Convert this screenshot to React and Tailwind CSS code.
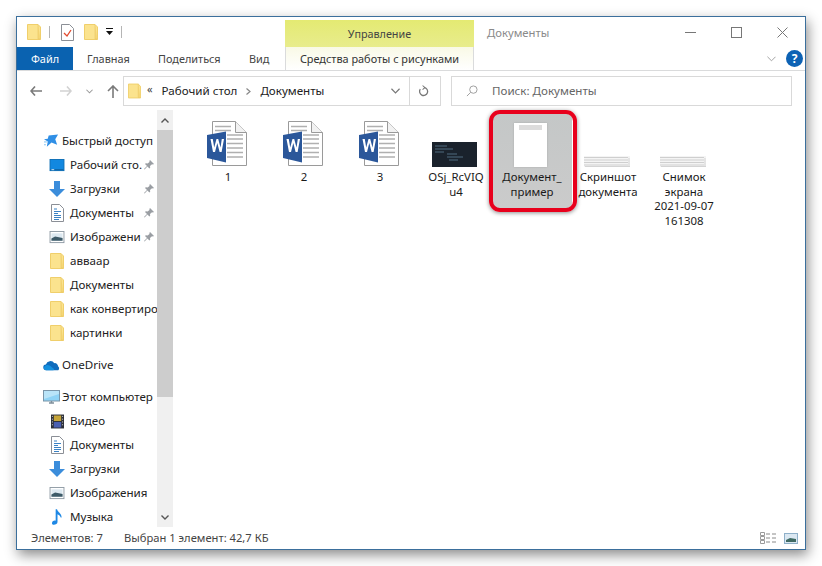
const Folder = ({ className = "w-[14px] h-[16px]" }) => (
  <svg viewBox="0 0 14 16" className={className}>
    <path d="M.5.5h10.5l2.500 2.500v12.500H.5z" fill="#fbe38e" stroke="#f0cf6b" />
    <path d="M11 .5v14.500h2.500" fill="#f6d776" stroke="#eac765" strokeWidth=".6" />
  </svg>
);
const DocIcon = () => (
  <svg viewBox="0 0 13 18" className="w-[13px] h-[18px]">
    <path d="M.5.5h8l4 4v13H.5z" fill="#fff" stroke="#8b8f96" />
    <path d="M3 5h3M3 7.500h7M3 9.500h4M3 11.500h7M3 13.500h7M3 15.500h5" stroke="#3b82c4" strokeWidth="1" />
  </svg>
);
const Pin = () => (
  <svg viewBox="0 0 10 10" className="w-[10px] h-[10px]">
    <path d="M6 0l4 4-1 .6-1-.4L6 6l.2 1.800L5.400 8.500 3.400 6.500.6 9.500 0 9l3-2.900-2-2 .8-.8L3.600 3.600 5.500 2 5.400 1z" fill="#9a9ea3" />
  </svg>
);
const Star = () => (
  <svg viewBox="0 0 16 14" className="w-[15px] h-[14px]">
    <path d="M5 1l10-1-3 5 2 6-6-2.500L3 13l1-5.500L0 5l4-.5z" fill="#2f8fe6" />
    <path d="M0 8h3M0 11h2" stroke="#7cc0f2" strokeWidth="1" />
  </svg>
);
const Desktop = () => (
  <svg viewBox="0 0 16 14" className="w-[16px] h-[13px]">
    <rect x=".5" y=".5" width="15" height="12" fill="#1288e0" stroke="#0b6db5" />
    <path d="M1 11.500h14" stroke="#0c5f9e" strokeWidth="1" />
    <path d="M2 11.500h3" stroke="#ddeefa" strokeWidth="1" />
  </svg>
);
const Download = () => (
  <svg viewBox="0 0 16 16" className="w-[16px] h-[16px]">
    <path d="M5 0h6v8h5l-8 8-8-8h5z" fill="#3b8ddb" />
  </svg>
);
const Pictures = () => (
  <svg viewBox="0 0 16 14" className="w-[16px] h-[13px]">
    <rect x=".5" y=".5" width="15" height="12" fill="#fff" stroke="#8d99a3" />
    <rect x="2" y="2.500" width="12" height="8" fill="#dce8f0" />
    <path d="M2 8l4-2 8 1.500v3H2z" fill="#3d5a68" />
  </svg>
);
const Cloud = () => (
  <svg viewBox="0 0 18 11" className="w-[17px] h-[11px]">
    <path d="M3.500 10.500a3 3 0 01-.4-6A5 5 0 0112 3a3.500 3.500 0 014 3.500c1.500.5 1.500 4-.5 4z" fill="#0f6cbd" />
    <path d="M3.500 10.500c-3 0-3.500-4-.5-5 2-1 4 0 6 1.500l3 2.500-1 1z" fill="#1490df" />
  </svg>
);
const Computer = () => (
  <svg viewBox="0 0 17 15" className="w-[17px] h-[15px]">
    <rect x=".5" y=".5" width="16" height="10.500" fill="#8fd3f5" stroke="#7a95a8" />
    <path d="M1 1h15v3L1 9z" fill="#b9e4f8" />
    <path d="M6 13h5M8.500 11v2" stroke="#7f8f9b" strokeWidth="1.500" />
  </svg>
);
const Film = () => (
  <svg viewBox="0 0 14 15" className="w-[13px] h-[15px]">
    <rect width="14" height="15" fill="#2d2f38" />
    <rect x="3" y="1" width="8" height="6" fill="#c7a63a" />
    <rect x="3" y="8" width="8" height="6" fill="#4a5fb0" />
    <path d="M1 2h1M1 5h1M1 8h1M1 11h1M12 2h1M12 5h1M12 8h1M12 11h1" stroke="#e6e6e6" strokeWidth="1" />
  </svg>
);
const Music = () => (
  <svg viewBox="0 0 12 17" className="w-[11px] h-[16px]">
    <path d="M4 0h1.500c.5 3 5 4.500 5 9h-1C9 7 7 6 6 5.500V14c0 2-2 3-4 3-1.500 0-2-1-2-1.500C0 13 2 12 4 12.500z" fill="#1e88e5" />
  </svg>
);
const Word = () => (
  <svg viewBox="0 0 40 46" className="w-[40px] h-[46px] mr-[3px]">
    <path d="M5.500.5h23l11 11v33h-34z" fill="#fff" stroke="#9a9a9a" />
    <path d="M28.500.5v11h11" fill="#f2f2f2" stroke="#9a9a9a" />
    <path d="M8 5.500h16M8 9.500h16M20 14h16M20 18h16M20 22.500h16M20 27h16M20 31.500h16M20 36h16" stroke="#b0b0b0" strokeWidth="1.600" />
    <path d="M0 14l19-3.500v31L0 37z" fill="#2b579a" />
    <path d="M3.500 18l2.500 13h2l2.300-9 2.300 9h2L17 18h-2.200l-1.300 8.500L11.200 18H9.500l-2.300 8.500L5.800 18z" fill="#fff" />
  </svg>
);
const Row = ({ icon, text, pin, top }) => (
  <div className={`flex items-center h-[24px] whitespace-nowrap relative ${top ? "pl-[24px]" : "pl-[32px]"}`}>
    <span className={`flex items-center justify-center shrink-0 ${top ? "w-[20px] mr-[1px]" : "w-[16px] mr-[5px]"}`}>{icon}</span>
    <span>{text}</span>
    {pin && (
      <span className="absolute left-[126px] top-[7px] bg-white pl-[1px]">
        <Pin />
      </span>
    )}
  </div>
);
const FileItem = ({ icon, lines, selected }) => (
  <div className="w-[76px] shrink-0 flex flex-col items-center relative">
    {selected && (
      <>
        <div className="absolute left-[-1px] top-[-4px] w-[79px] h-[94px] bg-gradient-to-b from-[#c4c7c7] to-[#cbcbcb]" />
        <div className="absolute left-[-5px] top-[-8px] w-[88px] h-[102px] rounded-[11px] border-[4px] border-[#e8001c] shadow-[0_1px_4px_rgba(0,0,0,0.45)]" />
      </>
    )}
    <div className="h-[49px] flex items-end justify-center relative">{icon}</div>
    <div className="mt-[3px] text-center leading-[14.700px] text-[11.400px] text-[#1a1a1a] relative">
      {lines.map((l) => (
        <div key={l} className="whitespace-nowrap">{l}</div>
      ))}
    </div>
  </div>
);
const Shot = () => (
  <svg viewBox="0 0 46 11" className="w-[46px] h-[11px] mr-[2px]">
    <rect width="46" height="11" fill="#f4f4f4" />
    <path d="M0 1.500h44M0 4h44M0 6.500h44M0 9h44" stroke="#cfcfcf" strokeWidth="1.200" />
    <path d="M45 2v9M1 10.500h45" stroke="#d4d4d4" strokeWidth="1" />
  </svg>
);

export default function App() {
  return (
    <div className="w-[822px] h-[566px] bg-white pt-[16px] pl-[16px] overflow-hidden text-[11.600px] text-[#222]" style={{ fontFamily: '"Noto Sans", sans-serif' }}>
      <div className="w-[790px] h-[534px] bg-white border border-[#3b6f9c] flex flex-col shadow-[2px_5px_12px_rgba(0,0,0,0.45)]">
        {/* title row */}
        <div className="h-[30px] flex relative shrink-0">
          <div className="flex items-center pl-[10px] w-[268px]">
            <Folder />
            <div className="w-px h-[12px] bg-[#b5b5b5] ml-[8px]" />
            <span className="ml-[11px]">
              <svg viewBox="0 0 13 17" className="w-[13px] h-[17px]">
                <path d="M.5.5h8l4 4v12H.5z" fill="#fff" stroke="#8b8f96" />
                <path d="M3 9l3 3 4-6" fill="none" stroke="#e2492e" strokeWidth="1.300" />
              </svg>
            </span>
            <span className="ml-[10px]"><Folder /></span>
            <svg viewBox="0 0 7 8" className="w-[7px] h-[8px] ml-[8px]">
              <path d="M0 0h7v1H0zM0 3h7L3.500 7z" fill="#111" />
            </svg>
            <div className="w-px h-[12px] bg-[#b5b5b5] ml-[8px]" />
          </div>
          <div className="w-[189px] mt-[3px] bg-gradient-to-b from-[#e4ea72] to-[#e8ec8c] flex items-center justify-center text-[#444] text-[10.800px] pt-[1px]">Управление</div>
          <div className="ml-[13px] flex items-center text-[#8a8a8a] text-[11.300px] pt-[2px]">Документы</div>
          <div className="ml-auto flex items-center text-[#666] pr-[17px] gap-[35px]">
            <svg viewBox="0 0 11 11" className="w-[11px] h-[11px]"><path d="M0 5.500h11" stroke="#777" /></svg>
            <svg viewBox="0 0 11 11" className="w-[11px] h-[11px]"><rect x=".5" y=".5" width="10" height="10" fill="none" stroke="#777" /></svg>
            <svg viewBox="0 0 11 11" className="w-[11px] h-[11px]"><path d="M.5.500l10 10M10.500.500l-10 10" stroke="#777" /></svg>
          </div>
        </div>
        {/* tabs */}
        <div className="h-[24px] flex items-stretch border-b border-[#dadbdc] shrink-0 relative text-[10.900px]">
          <div className="w-[56px] bg-[#0a62b0] text-white flex items-center justify-center pt-[1px]">Файл</div>
          <div className="w-[85px] pl-[14px] flex items-center text-[#444] pt-[1px]">Главная</div>
          <div className="w-[91px] flex items-center text-[#444] pt-[1px]">Поделиться</div>
          <div className="w-[36px] flex items-center text-[#444] pt-[1px]">Вид</div>
          <div className="w-[189px] border-x border-[#dadbdc] bg-gradient-to-b from-[#f9f9e6] to-white flex items-center justify-center text-[#333] whitespace-nowrap mb-[-1px] h-[23px] pt-[1px]">Средства работы с рисунками</div>
          <div className="ml-auto flex items-center pr-[2px]">
            <svg viewBox="0 0 10 6" className="w-[9px] h-[6px] mr-[10px]"><path d="M.5.500L5 5 9.500.500" fill="none" stroke="#999" /></svg>
            <div className="w-[17px] h-[17px] rounded-full bg-[#0d62b4] text-white flex items-center justify-center font-bold text-[12px]">?</div>
          </div>
        </div>
        {/* address row */}
        <div className="h-[39px] flex items-start shrink-0 pt-[5px] text-[#333]">
          <div className="w-[106px] h-[30px] flex items-center shrink-0 pl-[13px]">
            <svg viewBox="0 0 12 10" className="w-[12px] h-[10px]"><path d="M5 .5L1 5l4 4.500M1 5h11" fill="none" stroke="#7a7a7a" strokeWidth="1.600" /></svg>
            <svg viewBox="0 0 12 10" className="w-[12px] h-[10px] ml-[18px]"><path d="M7 .5L11 5 7 9.500M11 5H0" fill="none" stroke="#d2d2d2" strokeWidth="1.600" /></svg>
            <svg viewBox="0 0 8 5" className="w-[7px] h-[5px] ml-[14px]"><path d="M.5.500L4 4 7.500.500" fill="none" stroke="#999" strokeWidth="1.200" /></svg>
            <svg viewBox="0 0 12 13" className="w-[12px] h-[13px] ml-[14px]"><path d="M1 6l5-5 5 5M6 1v12" fill="none" stroke="#7a7a7a" strokeWidth="1.600" /></svg>
          </div>
          <div className="w-[318px] h-[30px] border border-[#d9d9d9] flex items-center shrink-0">
            <span className="ml-[4px]"><Folder className="w-[13px] h-[16px]" /></span>
            <span className="ml-[6px] mt-[-5px] text-[#444] text-[11px] leading-none">«</span>
            <span className="ml-[9px] text-[#222]">Рабочий стол</span>
            <svg viewBox="0 0 5 7" className="w-[5px] h-[7px] ml-[9px]"><path d="M.5.500L4 3.500.5 6.500" fill="none" stroke="#888" strokeWidth="1.200" /></svg>
            <span className="ml-[9px] text-[#222]">Документы</span>
            <svg viewBox="0 0 10 6" className="w-[9px] h-[6px] ml-auto mr-[9px]"><path d="M.5.500L5 5 9.500.500" fill="none" stroke="#777" strokeWidth="1.300" /></svg>
            <div className="w-[31px] h-full border-l border-[#d9d9d9] flex items-center justify-center pr-[3px]">
              <svg viewBox="0 0 12 12" className="w-[11px] h-[12px]"><path d="M7 2.200A4.400 4.400 0 112.500 4" fill="none" stroke="#777" strokeWidth="1.400" /><path d="M5 0l2.500 2.300L5 4.600" fill="none" stroke="#777" strokeWidth="1.100" /></svg>
            </div>
          </div>
          <div className="w-[341px] h-[30px] ml-[10px] border border-[#d9d9d9] flex items-center shrink-0">
            <svg viewBox="0 0 13 13" className="w-[12px] h-[12px] ml-[14px]"><circle cx="8" cy="5" r="4" fill="none" stroke="#999" /><path d="M5 8l-4 4" stroke="#999" /></svg>
            <span className="ml-[14px] text-[#666]">Поиск: Документы</span>
          </div>
        </div>
        {/* body */}
        <div className="flex-1 flex min-h-0">
          <div className="w-[140px] shrink-0 overflow-hidden pt-[19px]">
            <Row top icon={<Star />} text="Быстрый доступ" />
            <Row icon={<Desktop />} text="Рабочий сто." pin />
            <Row icon={<Download />} text="Загрузки" pin />
            <Row icon={<DocIcon />} text="Документы" pin />
            <Row icon={<Pictures />} text="Изображени" pin />
            <Row icon={<Folder />} text="авваар" />
            <Row icon={<Folder />} text="Документы" />
            <Row icon={<Folder />} text="как конвертиро" />
            <Row icon={<Folder />} text="картинки" />
            <div className="h-[8px]" />
            <Row top icon={<Cloud />} text="OneDrive" />
            <div className="h-[8px]" />
            <Row top icon={<Computer />} text="Этот компьютер" />
            <Row icon={<Film />} text="Видео" />
            <Row icon={<DocIcon />} text="Документы" />
            <Row icon={<Download />} text="Загрузки" />
            <Row icon={<Pictures />} text="Изображения" />
            <Row icon={<Music />} text="Музыка" />
          </div>
          <div className="w-[16px] shrink-0 bg-[#f0f0f0] flex flex-col">
            <div className="h-[20px] flex items-center justify-center">
              <svg viewBox="0 0 8 5" className="w-[8px] h-[5px]"><path d="M.5 4.500L4 1l3.500 3.500" fill="none" stroke="#555" strokeWidth="1.400" /></svg>
            </div>
            <div className="h-[267px] bg-[#cdcdcd]" />
            <div className="flex-1 flex items-end justify-center pb-[7px]">
              <svg viewBox="0 0 8 5" className="w-[8px] h-[5px]"><path d="M.5.500L4 4 7.500.500" fill="none" stroke="#555" strokeWidth="1.400" /></svg>
            </div>
          </div>
          <div className="flex-1 flex items-start pl-[17px] pt-[8px]">
            <FileItem icon={<Word />} lines={["1"]} />
            <FileItem icon={<Word />} lines={["2"]} />
            <FileItem icon={<Word />} lines={["3"]} />
            <FileItem
              lines={["OSj_RcVIQ", "u4"]}
              icon={
                <svg viewBox="0 0 45 25" className="w-[45px] h-[25px] mr-[3px]">
                  <rect width="45" height="25" fill="#1a222c" />
                  <path d="M3 4h12M3 7h18M3 10h9M15 12h10M15 15h16M17 18h9" stroke="#4e6a7f" strokeWidth="1" />
                </svg>
              }
            />
            <FileItem
              selected
              lines={["Документ_", "пример"]}
              icon={
                <div className="w-[33px] h-[44px] mr-[3px] bg-white pt-[2px] px-[5px] shadow-[0_0_2px_rgba(0,0,0,0.15)]">
                  <div className="h-[5px] bg-[#dcdcdc]" />
                </div>
              }
            />
            <FileItem icon={<Shot />} lines={["Скриншот", "документа"]} />
            <FileItem icon={<Shot />} lines={["Снимок", "экрана", "2021-09-07", "161308"]} />
          </div>
        </div>
        {/* status */}
        <div className="h-[22px] flex items-center shrink-0 pl-[14px] text-[#444] text-[11.200px] relative">
          <span className="w-[93px]">Элементов: 7</span>
          <span>Выбран 1 элемент: 42,7 КБ</span>
          <div className="ml-auto flex items-center pr-[7px]">
            <svg viewBox="0 0 17 12" className="w-[17px] h-[12px]">
              <path d="M.5.500h4v3h-4zM.5 4.500h4v3h-4zM.5 8.500h4v3h-4z" fill="none" stroke="#9a9a9a" />
              <path d="M6 2h4M12 2h4M6 6h4M12 6h4M6 10h4M12 10h4" stroke="#8a8a8a" />
            </svg>
            <svg viewBox="0 0 14 11" className="w-[14px] h-[11px] ml-[7px]">
              <rect x=".5" y=".5" width="13" height="10" fill="#dbe8f2" stroke="#8fb0c9" />
              <path d="M2 7l4-2 6 1v3H2z" fill="#3f6a63" />
            </svg>
          </div>
        </div>
      </div>
    </div>
  );
}
